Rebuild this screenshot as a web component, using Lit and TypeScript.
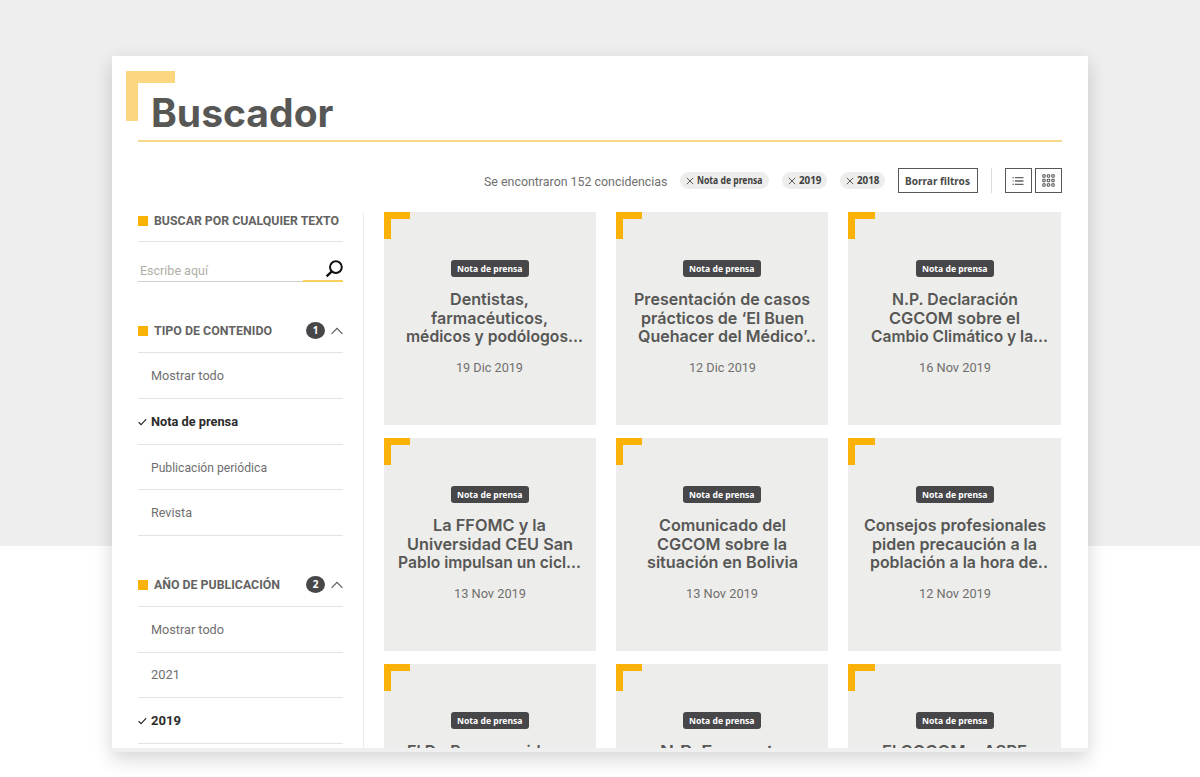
import { LitElement, html, css, svg } from "lit";
import { customElement, property, state } from "lit/decorators.js";

/* One line of text scaled horizontally to a given measure. */
@customElement("fit-text")
class FitText extends LitElement {
  static styles = css`
    :host { display: inline-block; vertical-align: top; white-space: nowrap; text-align: left; }
    .t { display: inline-block; transform-origin: 0 50%; }
  `;
  @property({ type: Number }) w = 0;
  @property() text = "";
  @state() scale = 1;
  firstUpdated() {
    const el = this.renderRoot.querySelector(".t") as HTMLElement;
    const natural = el.getBoundingClientRect().width;
    if (this.w && natural) {
      this.style.width = this.w + "px";
      this.scale = this.w / natural;
    }
  }
  render() {
    return html`<span class="t" style="transform:scaleX(${this.scale})">${this.text}</span>`;
  }
}

const ft = (text: string, w: number) => html`<fit-text .text=${text} .w=${w}></fit-text>`;

type Line = [string, number];
interface Card { lines: Line[]; date?: Line; }
const cards: Card[] = [
  { lines: [["Dentistas,", 79], ["farmacéuticos,", 117], ["médicos y podólogos...", 177]], date: ["19 Dic 2019", 67] },
  { lines: [["Presentación de casos", 176], ["prácticos de ‘El Buen", 163], ["Quehacer del Médico’..", 178]], date: ["12 Dic 2019", 67] },
  { lines: [["N.P. Declaración", 126], ["CGCOM sobre el", 131], ["Cambio Climático y la...", 177]], date: ["16 Nov 2019", 72] },
  { lines: [["La FFOMC y la", 113], ["Universidad CEU San", 166], ["Pablo impulsan un cicl...", 183]], date: ["13 Nov 2019", 72] },
  { lines: [["Comunicado del", 127], ["CGCOM sobre la", 130], ["situación en Bolivia", 151]], date: ["13 Nov 2019", 72] },
  { lines: [["Consejos profesionales", 182], ["piden precaución a la", 165], ["población a la hora de..", 178]], date: ["12 Nov 2019", 72] },
  { lines: [["El Dr. Roca preside en", 166]] },
  { lines: [["N.P. Encuesta", 124]] },
  { lines: [["El CGCOM y ASPE", 145]] },
];

interface Item { label: string; w: number; on?: boolean; }
const types: Item[] = [
  { label: "Mostrar todo", w: 73 },
  { label: "Nota de prensa", w: 87, on: true },
  { label: "Publicación periódica", w: 116 },
  { label: "Revista", w: 41 },
];
const years: Item[] = [
  { label: "Mostrar todo", w: 73 },
  { label: "2021", w: 29 },
  { label: "2019", w: 30, on: true },
];

@customElement("app-root")
class AppRoot extends LitElement {
  static styles = css`
    :host {
      display: block; box-sizing: border-box; height: 777px; overflow: hidden;
      padding: 55.5px 112px 0;
      background: linear-gradient(#eeeeee 0 546px, #ffffff 546px);
      font-family: Roboto, "Liberation Sans", sans-serif; font-size: 13px; color: #706f6f;
    }
    *, *::before { box-sizing: border-box; }
    .panel {
      height: 696.5px; background: #fff; border-bottom: 4px solid #efefef;
      box-shadow: 0 7px 18px rgba(0, 0, 0, 0.17); display: flex; flex-direction: column;
      padding: 15.5px 26.5px 0 26px; overflow: hidden;
    }
    .head { height: 71px; flex: none; border-bottom: 2px solid #f8d889; display: flex; }
    .bracket { width: 49.5px; height: 50px; flex: none; margin-left: -12.5px; border: solid #fcd77f; border-width: 12px 0 0 12px; }
    h1 { margin: 14.5px 0 0 -24.2px; font: 700 39px/54px Inter, sans-serif; color: #575756; }
    .bar { height: 25px; flex: none; margin-top: 26px; display: flex; align-items: center; justify-content: flex-end; }
    .count { margin-right: 13px; font-size: 13.5px; line-height: 20px; }
    .chip {
      height: 17px; border-radius: 9px; background: #ededeb; display: flex; align-items: center;
      gap: 3px; padding: 0 6px; margin-right: 13px; font: 700 10px/17px "Noto Sans", sans-serif; color: #3f3f3e;
    }
    .chip.year { width: 45px; }
    .clear { height: 25px; width: 80px; border: 1px solid #575756; display: flex; align-items: center; justify-content: center; font: 700 11px/20px "Noto Sans", sans-serif; color: #4a4a49; }
    .sep { width: 1px; height: 25px; background: #dcdcdc; margin: 0 13px; }
    .view { width: 27px; height: 25px; border: 1px solid #575756; display: flex; align-items: center; justify-content: center; }
    .view + .view { margin-left: 3px; }
    .body { flex: 1; min-height: 0; margin-top: 19.5px; display: flex; }
    aside { width: 226px; flex: none; border-right: 1px solid #ececec; padding-right: 20px; }
    .sec { height: 29px; padding-bottom: 12px; border-bottom: 1px solid #e3e3e3; display: flex; align-items: center; font-weight: 700; line-height: 16px; color: #636362; }
    .sec::before { content: ""; width: 10px; height: 10px; background: #fab207; margin-right: 6px; }
    .sec .n { margin-left: auto; width: 19px; height: 17px; border-radius: 50%; background: #47474a; color: #fff; font: 700 10px/17px "Noto Sans", sans-serif; text-align: center; margin-right: 6px; }
    .search { height: 41px; display: flex; align-items: flex-start; color: #b0afa8; }
    .search .in { flex: 1; height: 40px; padding: 21px 0 0 2px; line-height: 16px; border-bottom: 1px solid #cfcfcd; }
    .search .go { width: 40px; height: 40.5px; display: flex; justify-content: flex-end; padding-top: 18px; border-bottom: 2px solid #f8d060; }
    .group { margin-top: 40.5px; }
    .group .sec { height: 29.8px; padding-bottom: 13px; }
    .group + .group { margin-top: 40px; }
    .group + .group .sec { height: 30.3px; padding-bottom: 13px; }
    .item { height: 45.9px; border-bottom: 1px solid #e3e3e3; display: flex; align-items: center; padding-top: 1px; line-height: 18px; }
    .item .ck { width: 13px; display: flex; }
    .item.on { color: #2b2b2a; font-weight: 700; }
    .grid { flex: 1; min-width: 0; margin: -0.2px 0.6px 0 19.5px; display: grid; grid-template-columns: repeat(3, 1fr); grid-auto-rows: 213px; gap: 13px 20px; align-content: start; }
    .card { background: #ededeb; display: flex; flex-direction: column; align-items: center; }
    .card::before { content: ""; flex: none; align-self: flex-start; width: 26.5px; height: 27px; margin-bottom: 21px; border: solid #fab207; border-width: 7px 0 0 7px; }
    .tag { height: 17px; width: 78px; flex: none; border-radius: 3px; background: #47474a; color: #fff; text-align: center; font: 700 9.5px/17px "Noto Sans", sans-serif; }
    .title { flex: none; margin-top: 13px; text-align: center; font: 600 16.5px/18.3px Inter, sans-serif; color: #575756; }
    .line { display: flex; justify-content: center; }
    .line.cut { padding-left: 9px; }
    .date { margin-top: 14px; line-height: 18px; }
    svg { display: block; flex: none; }
  `;

  x() {
    return svg`<svg width="8" height="8" viewBox="0 0 8 8"><path d="M.8 .8 7.2 7.2M7.2 .8 .8 7.2" stroke="#4a4a49" stroke-width=".9" fill="none"/></svg>`;
  }
  chevron() {
    return svg`<svg width="12" height="8" viewBox="0 0 12 8"><path d="M.6 6.9 6 1.3 11.4 6.9" stroke="#575756" stroke-width="1.1" fill="none"/></svg>`;
  }
  item(i: Item) {
    return html`<div class="item ${i.on ? "on" : ""}">
      <span class="ck">${i.on ? svg`<svg width="9" height="8" viewBox="0 0 9 8"><path d="M.6 4.2 3.1 6.6 8.2 1.1" stroke="#2b2b2a" stroke-width="1.2" fill="none"/></svg>` : ""}</span>${ft(i.label, i.w)}</div>`;
  }
  card(c: Card) {
    return html`<article class="card">
      <div class="tag">${ft("Nota de prensa", 65.5)}</div>
      <div class="title">${c.lines.map(([t, w]) => html`<div class="line ${t.endsWith("..") && w < 180 ? "cut" : ""}">${ft(t, w)}</div>`)}</div>
      ${c.date ? html`<div class="date">${ft(c.date[0], c.date[1])}</div>` : ""}
    </article>`;
  }
  render() {
    const dots = [1.5, 6, 10.5];
    return html`<main class="panel">
      <header class="head"><div class="bracket"></div><h1>${ft("Buscador", 182.5)}</h1></header>
      <div class="bar">
        <span class="count">${ft("Se encontraron 152 concidencias", 183.5)}</span>
        <span class="chip">${this.x()}${ft("Nota de prensa", 65.5)}</span>
        <span class="chip year">${this.x()}${ft("2019", 22.5)}</span>
        <span class="chip year">${this.x()}${ft("2018", 22.5)}</span>
        <span class="clear">${ft("Borrar filtros", 65)}</span>
        <span class="sep"></span>
        <span class="view"><svg width="12" height="10" viewBox="0 0 12 10"><path d="M3 1.6H11.5M3 5H11.5M3 8.4H11.5" stroke="#636362" stroke-width="1.3"/><path d="M.5 1.6H1.8M.5 5H1.8M.5 8.4H1.8" stroke="#636362" stroke-width="1.1"/></svg></span>
        <span class="view"><svg width="13" height="13" viewBox="0 0 13 13">${dots.map((y) => dots.map((x) => svg`<rect x=${x - 0.7} y=${y - 0.7} width="2.4" height="2.4" rx=".6" fill="none" stroke="#575756" stroke-width="1.1"/>`))}</svg></span>
      </div>
      <div class="body">
        <aside>
          <div class="sec">${ft("BUSCAR POR CUALQUIER TEXTO", 185)}</div>
          <div class="search"><span class="in">${ft("Escribe aquí", 68)}</span><span class="go"><svg width="18" height="18" viewBox="0 0 18 18"><circle cx="10.9" cy="7.1" r="5.9" stroke="#111" stroke-width="2" fill="none"/><path d="M6.6 11.6 1.6 16.4" stroke="#111" stroke-width="2.3" fill="none"/></svg></span></div>
          <div class="group">
            <div class="sec">${ft("TIPO DE CONTENIDO", 118)}<span class="n">1</span>${this.chevron()}</div>
            ${types.map((i) => this.item(i))}
          </div>
          <div class="group">
            <div class="sec">${ft("AÑO DE PUBLICACIÓN", 126)}<span class="n">2</span>${this.chevron()}</div>
            ${years.map((i) => this.item(i))}
          </div>
        </aside>
        <section class="grid">${cards.map((c) => this.card(c))}</section>
      </div>
    </main>`;
  }
}
